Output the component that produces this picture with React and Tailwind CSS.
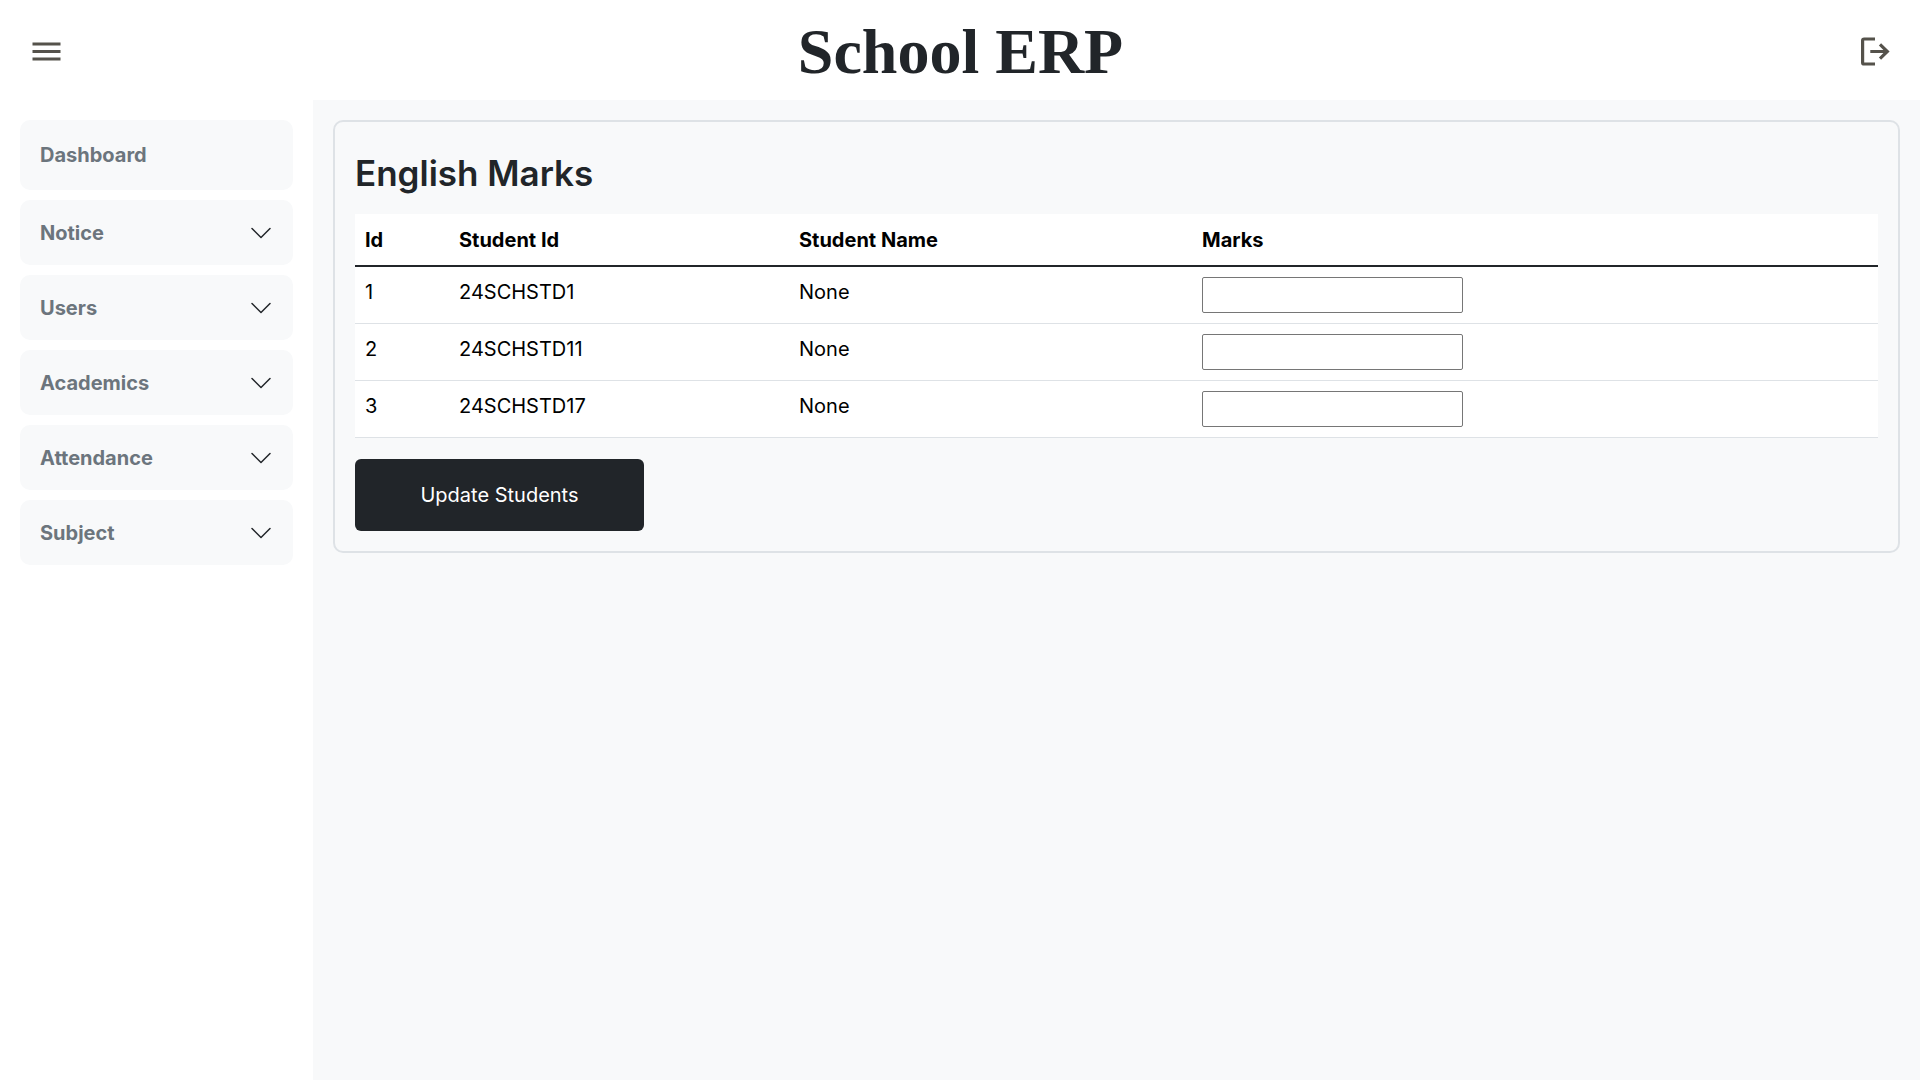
const MENU = ["Notice", "Users", "Academics", "Attendance", "Subject"];

const STUDENTS = [
  { id: 1, studentId: "24SCHSTD1", name: "None" },
  { id: 2, studentId: "24SCHSTD11", name: "None" },
  { id: 3, studentId: "24SCHSTD17", name: "None" },
];

function MenuIcon() {
  return (
    <svg width="29" height="20" viewBox="0 0 29 20" fill="#55524b" aria-hidden="true">
      <rect x="0.5" y="0.5" width="28" height="3" />
      <rect x="0.5" y="8" width="28" height="3" />
      <rect x="0.5" y="15.5" width="28" height="3" />
    </svg>
  );
}

function LogoutIcon() {
  return (
    <svg width="30" height="29" viewBox="0 0 30 29" fill="#55524b" aria-hidden="true">
      <path d="M15 0.4H4.2Q1 0.4 1 3.6V25.4Q1 28.6 4.2 28.6H15V25.5H4.2V3.5H15Z" />
      <path d="M10.3 13H23.4L18.9 8.5L21.1 6.3L29.6 14.5L21.1 22.7L18.9 20.5L23.4 16H10.3Z" />
    </svg>
  );
}

function Chevron() {
  return (
    <svg width="24" height="24" viewBox="0 0 16 16" fill="#212529" aria-hidden="true">
      <path
        fillRule="evenodd"
        d="M1.646 4.646a.5.5 0 0 1 .708 0L8 10.293l5.646-5.647a.5.5 0 0 1 .708.708l-6 6a.5.5 0 0 1-.708 0l-6-6a.5.5 0 0 1 0-.708z"
      />
    </svg>
  );
}

function Header() {
  return (
    <header className="flex h-25 items-center justify-between bg-white pr-7.5 pl-8">
      <button type="button" aria-label="Toggle menu" className="flex pt-1">
        <MenuIcon />
      </button>
      <h1 className="pt-1 font-['Liberation_Serif',serif] text-[64px] leading-none font-bold text-[#212529]">School ERP</h1>
      <button type="button" aria-label="Log out" className="flex pt-0.5">
        <LogoutIcon />
      </button>
    </header>
  );
}

function Sidebar() {
  return (
    <nav className="flex w-[313px] shrink-0 flex-col gap-2.5 bg-white p-5 font-bold text-[#6c757d]">
      <a href="#dashboard" className="flex h-17.5 items-center rounded-[10px] bg-[#f8f9fa] px-5">
        Dashboard
      </a>
      {MENU.map((label) => (
        <button
          key={label}
          type="button"
          className="flex h-16.25 items-center justify-between rounded-[10px] bg-[#f8f9fa] px-5"
        >
          {label}
          <Chevron />
        </button>
      ))}
    </nav>
  );
}

function MarksTable() {
  return (
    <table className="w-full table-fixed border-collapse bg-white text-left text-black">
      <colgroup>
        <col className="w-[94px]" />
        <col className="w-[340px]" />
        <col className="w-[403px]" />
        <col />
      </colgroup>
      <thead>
        <tr className="h-13 border-b-2 border-[#212529] font-bold">
          <th scope="col" className="px-2.5">Id</th>
          <th scope="col" className="px-2.5">Student Id</th>
          <th scope="col" className="px-2.5">Student Name</th>
          <th scope="col" className="px-2.5">Marks</th>
        </tr>
      </thead>
      <tbody>
        {STUDENTS.map((s) => (
          <tr key={s.id} className="border-b border-[#dee2e6] align-top">
            <td className="p-2.5">{s.id}</td>
            <td className="p-2.5">{s.studentId}</td>
            <td className="p-2.5">{s.name}</td>
            <td className="p-2.5">
              <input
                type="text"
                aria-label={`Marks for ${s.studentId}`}
                className="block h-9 w-[261px] rounded-xs border border-[#767676] bg-white px-1"
              />
            </td>
          </tr>
        ))}
      </tbody>
    </table>
  );
}

export default function App() {
  return (
    <div className="flex min-h-screen flex-col bg-white font-['Inter',sans-serif] text-xl leading-[30px] text-[#212529]">
      <Header />
      <div className="flex grow">
        <Sidebar />
        <main className="grow bg-[#f8f9fa] p-5">
          <form className="rounded-[10px] border-2 border-[#dee2e6] p-5">
            <h2 className="mt-2.5 mb-5 text-[35px] leading-[42px] font-semibold">English Marks</h2>
            <MarksTable />
            <button type="submit" className="mt-[21px] h-18 min-w-[289px] rounded-md bg-[#212529] px-5 text-white">
              Update Students
            </button>
          </form>
        </main>
      </div>
    </div>
  );
}
